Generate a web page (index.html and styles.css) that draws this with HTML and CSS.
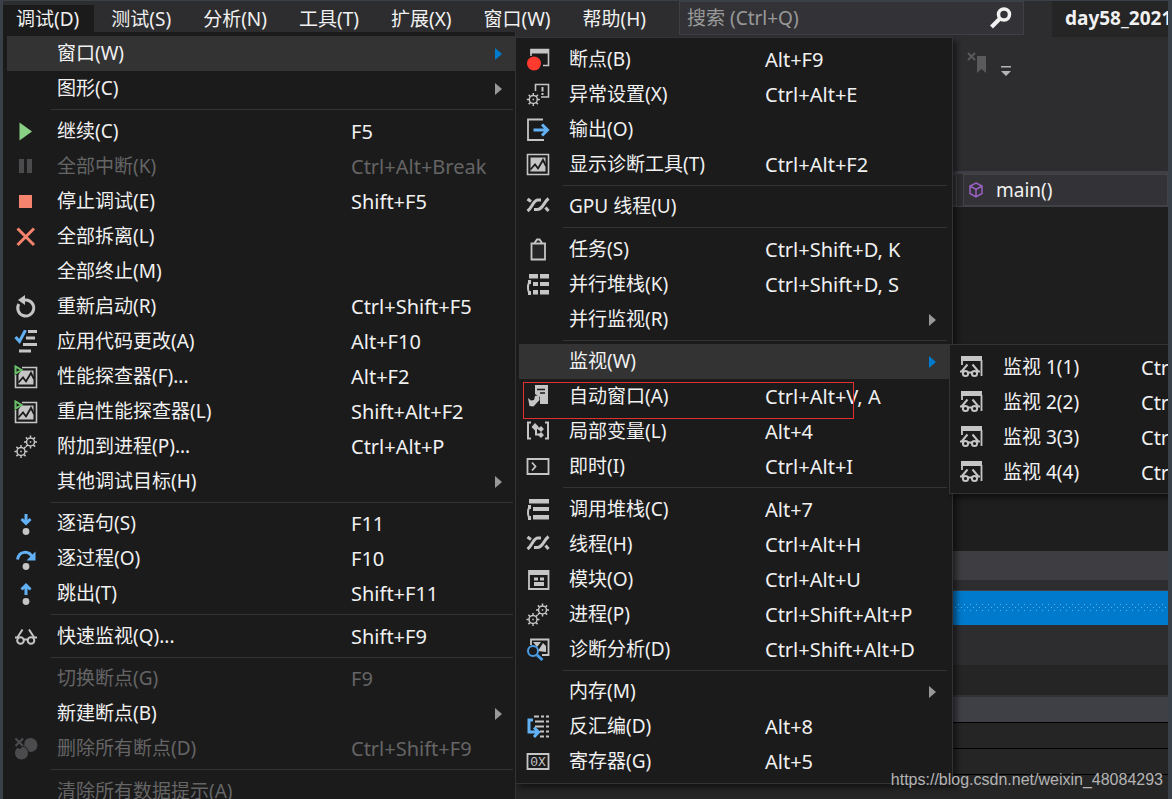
FILE: index.html
```html
<!DOCTYPE html>
<html lang="zh-CN">
<head>
<meta charset="utf-8">
<title>调试</title>
<link rel="stylesheet" href="styles.css">
</head>
<body>
<svg class="sprite" aria-hidden="true">
  <defs>
    <path id="cog" fill="none" stroke="currentColor" stroke-width="1.5" d="M0-4A4 4 0 1 1 0 4A4 4 0 1 1 0-4M0-4V-6.500M0 4V6.500M-4 0H-6.500M4 0H6.500M-2.800-2.800L-4.600-4.600M2.800-2.800L4.600-4.600M-2.800 2.800L-4.600 4.600M2.800 2.800L4.600 4.600M0-.8V.8"/>
    <g id="glasses" fill="none" stroke="currentColor" stroke-width="2"><circle cx="6.500" cy="15.500" r="3.300"/><circle cx="17" cy="15.500" r="3.300"/><path d="M1 12.500H5M10 14.500h4M19 12.500h4M3 13L8.500 4.500M20.500 13L15 4.500"/></g>
    <g id="chart"><path fill="none" stroke="currentColor" stroke-width="1.600" d="M1.500 1.500H22.500V21.500H1.500z"/><path fill="currentColor" d="M4.500 4.500H19.500V18.500H4.500z"/><path fill="none" stroke="#1b1b1c" stroke-width="1.800" d="M4.500 16.500L9 11.500l3 4L17 7l3 6"/></g>
    <g id="phone"><path fill="none" stroke="currentColor" stroke-width="2" d="M5 8.500C1 9 1 20 5 21"/><path fill="currentColor" d="M2 7h3v4H2zM2 18h3v4H2z"/></g>
  </defs>
  <symbol id="play" viewBox="0 0 24 24"><path fill="#89d185" d="M5.500 2.500V20.500L18 11.500z"/></symbol>
  <symbol id="pause" viewBox="0 0 24 24"><path fill="#4b4b4d" d="M5 4h5v14H5zM13 4h5v14h-5z"/></symbol>
  <symbol id="stop" viewBox="0 0 24 24"><path fill="#f6836d" d="M5 5h13v13H5z"/></symbol>
  <symbol id="detach" viewBox="0 0 24 24"><path stroke="#f6836d" stroke-width="3" d="M3.500 3.500L20 20M20 3.500L3.500 20"/></symbol>
  <symbol id="restart" viewBox="0 0 24 24"><path fill="none" stroke="currentColor" stroke-width="3" d="M4.800 9A8 8 0 1 0 12 5H8"/><path fill="currentColor" d="M4 5L11 0V10z"/></symbol>
  <symbol id="apply" viewBox="0 0 24 24"><path fill="none" stroke="#63b1f5" stroke-width="3" d="M1.500 7L5.500 11.500L11.500 0"/><path fill="currentColor" d="M14 0h9v3h-9zM12 6.500h9v3h-9zM9 13h14v3H9zM5 19.500h12v3H5z"/></symbol>
  <symbol id="profile" viewBox="0 0 24 24"><use href="#chart" y="1"/><path fill="#1b1b1c" d="M0 0H8V5L4 10H0z"/><path fill="none" stroke="#6cc26a" stroke-width="2" d="M1.500 1.500V8.500L7.500 5z"/></symbol>
  <symbol id="gears" viewBox="0 0 24 24"><use href="#cog" x="16.500" y="7"/><use href="#cog" x="7" y="16.500"/></symbol>
  <symbol id="into" viewBox="0 0 24 24"><path fill="none" stroke="#63b1f5" stroke-width="3" d="M12 2V12M7.500 7L12 11.500L16.500 7"/><circle cx="12" cy="19.500" r="3.400" fill="currentColor"/></symbol>
  <symbol id="over" viewBox="0 0 24 24"><path fill="none" stroke="#63b1f5" stroke-width="3" d="M3.500 12.500C5 3.500 15 3 19 11"/><path fill="#63b1f5" d="M21.500 4.500V13.500H12.500z"/><circle cx="12" cy="19.500" r="3.400" fill="currentColor"/></symbol>
  <symbol id="out" viewBox="0 0 24 24"><path fill="none" stroke="#63b1f5" stroke-width="3" d="M12 13V3M7.500 7.500L12 3L16.500 7.500"/><circle cx="12" cy="19.500" r="3.400" fill="currentColor"/></symbol>
  <symbol id="quick" viewBox="0 0 24 24"><use href="#glasses"/></symbol>
  <symbol id="clear" viewBox="0 0 24 24"><g fill="#4b4b4d"><circle cx="16.500" cy="8" r="7"/><circle cx="7.500" cy="16" r="7" stroke="#1b1b1c"/></g><path fill="#1b1b1c" d="M0 0H10.500V8L6 12L0 9z"/><path stroke="#4b4b4d" stroke-width="2.200" d="M1.500 1.500L9 9M9 1.500L1.500 9"/></symbol>
  <symbol id="breakwin" viewBox="0 0 24 24"><path fill="none" stroke="currentColor" stroke-width="1.600" d="M5 8V1.500H22.500V17.500H17"/><path fill="currentColor" d="M4.500 1H23V5.500H4.500z"/><circle cx="8" cy="15.500" r="7" fill="#ff3b30"/></symbol>
  <symbol id="exception" viewBox="0 0 24 24"><path fill="none" stroke="currentColor" stroke-width="1.600" d="M9.500 8V1.500H22.500V14H15"/><path stroke="currentColor" stroke-width="2" d="M16.500 4V8.500M16.500 10v2"/><use href="#cog" x="7.300" y="16.500"/></symbol>
  <symbol id="output" viewBox="0 0 24 24"><path fill="none" stroke="currentColor" stroke-width="1.800" d="M17 1.500H2V22H18"/><path fill="none" stroke="#63b1f5" stroke-width="3" d="M7.500 12H21M16 6.500L21.500 12L16 17.500"/></symbol>
  <symbol id="diag" viewBox="0 0 24 24"><use href="#chart"/></symbol>
  <symbol id="threads" viewBox="0 0 24 24"><path fill="none" stroke="currentColor" stroke-width="3" d="M1.500 4L5 6.500M1.500 16C7 12 7 5 12 5h3M8 14.500h3C17 14.500 17 8 22.500 3.500M19.500 12.500L22.500 16"/></symbol>
  <symbol id="task" viewBox="0 0 24 24"><path fill="#252527" stroke="currentColor" stroke-width="1.800" d="M5.500 5.500H19V21.500H5.500z"/><path fill="none" stroke="currentColor" stroke-width="2" d="M8.500 5L11 1.500h2.500L16 5"/></symbol>
  <symbol id="pstack" viewBox="0 0 24 24"><path fill="currentColor" d="M3 1h9v4.500H3zM14 1h9v4.500h-9zM7 9h5v4H7zM14 9h9v4h-9zM7 17h5v4.500H7zM14 17h9v4.500h-9z"/><use href="#phone"/></symbol>
  <symbol id="autos" viewBox="0 0 24 24"><path fill="currentColor" d="M9 0H22V19H14V12L9 9z"/><path stroke="#1b1b1c" stroke-width="1.500" d="M11 4.500h8M14 8h5"/><path fill="currentColor" d="M2 13L5 15.500L8 15L9 11L13 10L13.500 15L7.500 21.500L3.500 21z"/></symbol>
  <symbol id="locals" viewBox="0 0 24 24"><path fill="none" stroke="currentColor" stroke-width="2" d="M5 2.500H2V18.500H5M19 2.500H22V18.500H19M8 6.500L15 9.500M10 8V14.500H15"/><path fill="currentColor" d="M9 3L12.500 6.500L9 10.500L5.500 7zM15 6L18 9L15 12L12 9zM15 12L18 15L15 18L12 15z"/></symbol>
  <symbol id="immediate" viewBox="0 0 24 24"><path fill="none" stroke="currentColor" stroke-width="1.800" d="M1.500 4H22.500V19H1.500zM6 7.500L9.500 11.500L6 15.500"/></symbol>
  <symbol id="stack" viewBox="0 0 24 24"><path fill="currentColor" d="M3 1h20v4.500H3zM7 9h16v4H7zM7 17h16v4.500H7z"/><use href="#phone"/></symbol>
  <symbol id="modules" viewBox="0 0 24 24"><path fill="none" stroke="currentColor" stroke-width="1.800" d="M3 3H22.500V21H3z"/><path fill="currentColor" d="M3 2h20v5H3zM8 9.500h4v3H8zM14 9.500h4v3h-4zM8 14h10v4H8z"/></symbol>
  <symbol id="analysis" viewBox="0 0 24 24"><path fill="none" stroke="currentColor" stroke-width="1.800" d="M5 7V1.500H22.500V17H16"/><path fill="currentColor" d="M7 4h8l-4 5zM12 13l5-8 3 3v6z"/><circle cx="7" cy="13" r="5" fill="#1b1b1c" stroke="#4a9fe8" stroke-width="2"/><path stroke="#4a9fe8" stroke-width="3" d="M11 17L16.500 22"/></symbol>
  <symbol id="disasm" viewBox="0 0 24 24"><path fill="none" stroke="currentColor" stroke-width="1.800" d="M8 1.500H13M15 1.500h3M20 1.500h3M9 6.500h9M20 6.500h3M9 11.500h9M20 11.500h3M14 16.500h4M20 16.500h3M14 21.500h4M20 21.500h3"/><path fill="none" stroke="#63b1f5" stroke-width="3" d="M7 5H3V17H12M8 12.500L12.500 17L8 22"/></symbol>
  <symbol id="watch" viewBox="0 0 24 24"><path fill="none" stroke="currentColor" stroke-width="1.800" d="M2 9V2M21.500 4V20"/><path fill="currentColor" d="M1 0h21v5H1z"/><g fill="none" stroke="currentColor" stroke-width="2"><circle cx="5.500" cy="17.500" r="2.600"/><circle cx="14.500" cy="17.500" r="2.600"/><path d="M0 15.500H4M8 16.500h4M16 15.500h4M2 15L7.500 8.500M18 15L12.500 8.500"/></g></symbol>
  <symbol id="arrow" viewBox="0 0 8 12"><path fill="currentColor" d="M0 0V12L7 6z"/></symbol>
</svg>

<div class="app">
  <header class="top">
    <nav class="menubar" aria-label="主菜单">
      <button class="tab open">调试(D)</button>
      <button class="tab">测试(S)</button>
      <button class="tab">分析(N)</button>
      <button class="tab">工具(T)</button>
      <button class="tab">扩展(X)</button>
      <button class="tab">窗口(W)</button>
      <button class="tab">帮助(H)</button>
    </nav>
    <div class="search">
      <input type="text" placeholder="搜索 (Ctrl+Q)" aria-label="搜索">
      <svg class="lens" viewBox="0 0 24 24"><circle cx="15" cy="8.500" r="5.500" fill="none" stroke="#f1f1f1" stroke-width="3.500"/><path stroke="#f1f1f1" stroke-width="4" d="M11 12.500L2.500 21"/></svg>
    </div>
    <div class="solution">day58_2021</div>
  </header>
  <div class="toolbar">
    <svg class="bookmark" viewBox="0 0 50 26"><path fill="#5a5a5c" d="M10 4H19V21L14.500 17L10 21z"/><path stroke="#5a5a5c" stroke-width="2" d="M1 1L8 8M8 1L1 8"/><path fill="#b5b5b5" d="M34 14H44V15.500H34zM34 19H44L39 24z"/></svg>
  </div>
  <div class="navbar">
    <div class="scope"></div>
    <button class="member">
      <svg class="cube" viewBox="0 0 16 16"><path fill="none" stroke="#9b5fc0" stroke-width="1.500" d="M8 1L14 4V11.500L8 15L2 11.500V4zM2 4L8 7.500L14 4M8 7.500V15"/></svg>
      <span>main()</span>
    </button>
  </div>
  <main class="editor"></main>
  <div class="scrollbar"></div>
  <div class="gap"></div>
  <div class="tooltitle"><svg class="grip" width="100%" height="10"><defs><pattern id="dots" width="6" height="6" patternUnits="userSpaceOnUse"><path fill="#5fb0e6" d="M1 1h1v1H1zM4 4h1v1H4z"/></pattern></defs><rect width="100%" height="10" fill="url(#dots)"/></svg></div>
  <div class="tooltools"></div>
  <div class="toolbody"></div>
  <div class="columns"></div>
  <div class="line"></div>
  <div class="line"></div>
  <div class="line rest"></div>

  <ul class="menu debug">
    <li><button class="row hot"><i></i><span>窗口(W)</span><kbd></kbd><svg class="arrow"><use href="#arrow"/></svg></button></li>
    <li><button class="row"><i></i><span>图形(C)</span><kbd></kbd><svg class="arrow"><use href="#arrow"/></svg></button></li>
    <li class="sep"></li>
    <li><button class="row"><svg class="icon"><use href="#play"/></svg><span>继续(C)</span><kbd>F5</kbd></button></li>
    <li><button class="row" disabled><svg class="icon"><use href="#pause"/></svg><span>全部中断(K)</span><kbd>Ctrl+Alt+Break</kbd></button></li>
    <li><button class="row"><svg class="icon"><use href="#stop"/></svg><span>停止调试(E)</span><kbd>Shift+F5</kbd></button></li>
    <li><button class="row"><svg class="icon"><use href="#detach"/></svg><span>全部拆离(L)</span></button></li>
    <li><button class="row"><i></i><span>全部终止(M)</span></button></li>
    <li><button class="row"><svg class="icon"><use href="#restart"/></svg><span>重新启动(R)</span><kbd>Ctrl+Shift+F5</kbd></button></li>
    <li><button class="row"><svg class="icon"><use href="#apply"/></svg><span>应用代码更改(A)</span><kbd>Alt+F10</kbd></button></li>
    <li><button class="row"><svg class="icon"><use href="#profile"/></svg><span>性能探查器(F)...</span><kbd>Alt+F2</kbd></button></li>
    <li><button class="row"><svg class="icon"><use href="#profile"/></svg><span>重启性能探查器(L)</span><kbd>Shift+Alt+F2</kbd></button></li>
    <li><button class="row"><svg class="icon"><use href="#gears"/></svg><span>附加到进程(P)...</span><kbd>Ctrl+Alt+P</kbd></button></li>
    <li><button class="row"><i></i><span>其他调试目标(H)</span><kbd></kbd><svg class="arrow"><use href="#arrow"/></svg></button></li>
    <li class="sep tight"></li>
    <li><button class="row"><svg class="icon"><use href="#into"/></svg><span>逐语句(S)</span><kbd>F11</kbd></button></li>
    <li><button class="row"><svg class="icon"><use href="#over"/></svg><span>逐过程(O)</span><kbd>F10</kbd></button></li>
    <li><button class="row"><svg class="icon"><use href="#out"/></svg><span>跳出(T)</span><kbd>Shift+F11</kbd></button></li>
    <li class="sep"></li>
    <li><button class="row"><svg class="icon"><use href="#quick"/></svg><span>快速监视(Q)...</span><kbd>Shift+F9</kbd></button></li>
    <li class="sep tight"></li>
    <li><button class="row" disabled><i></i><span>切换断点(G)</span><kbd>F9</kbd></button></li>
    <li><button class="row"><i></i><span>新建断点(B)</span><kbd></kbd><svg class="arrow"><use href="#arrow"/></svg></button></li>
    <li><button class="row" disabled><svg class="icon"><use href="#clear"/></svg><span>删除所有断点(D)</span><kbd>Ctrl+Shift+F9</kbd></button></li>
    <li class="sep"></li>
    <li><button class="row" disabled><i></i><span>清除所有数据提示(A)</span></button></li>
  </ul>

  <ul class="menu windows">
    <li><button class="row"><svg class="icon"><use href="#breakwin"/></svg><span>断点(B)</span><kbd>Alt+F9</kbd></button></li>
    <li><button class="row"><svg class="icon"><use href="#exception"/></svg><span>异常设置(X)</span><kbd>Ctrl+Alt+E</kbd></button></li>
    <li><button class="row"><svg class="icon"><use href="#output"/></svg><span>输出(O)</span></button></li>
    <li><button class="row"><svg class="icon"><use href="#diag"/></svg><span>显示诊断工具(T)</span><kbd>Ctrl+Alt+F2</kbd></button></li>
    <li class="sep tight"></li>
    <li><button class="row"><svg class="icon"><use href="#threads"/></svg><span>GPU 线程(U)</span></button></li>
    <li class="sep"></li>
    <li><button class="row"><svg class="icon"><use href="#task"/></svg><span>任务(S)</span><kbd>Ctrl+Shift+D, K</kbd></button></li>
    <li><button class="row"><svg class="icon"><use href="#pstack"/></svg><span>并行堆栈(K)</span><kbd>Ctrl+Shift+D, S</kbd></button></li>
    <li><button class="row"><i></i><span>并行监视(R)</span><kbd></kbd><svg class="arrow"><use href="#arrow"/></svg></button></li>
    <li class="sep tight"></li>
    <li><button class="row hot"><i></i><span>监视(W)</span><kbd></kbd><svg class="arrow"><use href="#arrow"/></svg></button></li>
    <li class="marked"><button class="row"><svg class="icon"><use href="#autos"/></svg><span>自动窗口(A)</span><kbd>Ctrl+Alt+V, A</kbd></button></li>
    <li><button class="row"><svg class="icon"><use href="#locals"/></svg><span>局部变量(L)</span><kbd>Alt+4</kbd></button></li>
    <li><button class="row"><svg class="icon"><use href="#immediate"/></svg><span>即时(I)</span><kbd>Ctrl+Alt+I</kbd></button></li>
    <li class="sep"></li>
    <li><button class="row"><svg class="icon"><use href="#stack"/></svg><span>调用堆栈(C)</span><kbd>Alt+7</kbd></button></li>
    <li><button class="row"><svg class="icon"><use href="#threads"/></svg><span>线程(H)</span><kbd>Ctrl+Alt+H</kbd></button></li>
    <li><button class="row"><svg class="icon"><use href="#modules"/></svg><span>模块(O)</span><kbd>Ctrl+Alt+U</kbd></button></li>
    <li><button class="row"><svg class="icon"><use href="#gears"/></svg><span>进程(P)</span><kbd>Ctrl+Shift+Alt+P</kbd></button></li>
    <li><button class="row"><svg class="icon"><use href="#analysis"/></svg><span>诊断分析(D)</span><kbd>Ctrl+Shift+Alt+D</kbd></button></li>
    <li class="sep tight"></li>
    <li><button class="row"><i></i><span>内存(M)</span><kbd></kbd><svg class="arrow"><use href="#arrow"/></svg></button></li>
    <li><button class="row"><svg class="icon"><use href="#disasm"/></svg><span>反汇编(D)</span><kbd>Alt+8</kbd></button></li>
    <li><button class="row"><svg class="icon" viewBox="0 0 24 24"><path fill="none" stroke="currentColor" stroke-width="1.800" d="M1.500 4H22.500V19H1.500z"/><text class="reg" x="12" y="16" text-anchor="middle" fill="currentColor">0X</text></svg><span>寄存器(G)</span><kbd>Alt+5</kbd></button></li>
  </ul>

  <ul class="menu watches">
    <li><button class="row"><svg class="icon"><use href="#watch"/></svg><span>监视 1(1)</span><kbd>Ctr</kbd></button></li>
    <li><button class="row"><svg class="icon"><use href="#watch"/></svg><span>监视 2(2)</span><kbd>Ctr</kbd></button></li>
    <li><button class="row"><svg class="icon"><use href="#watch"/></svg><span>监视 3(3)</span><kbd>Ctr</kbd></button></li>
    <li><button class="row"><svg class="icon"><use href="#watch"/></svg><span>监视 4(4)</span><kbd>Ctr</kbd></button></li>
  </ul>
</div>
<div class="credit">https://blog.csdn.net/weixin_48084293</div>
</body>
</html>
```
FILE: styles.css
```css
* { box-sizing: border-box; }

body {
  margin: 0;
  height: 100vh;
  overflow: hidden;
  position: relative;
  padding: 1px 4px 0 3px;
  background: #3a4047;
  color: #f1f1f1;
  font: 19px/35px "Noto Sans", "Noto Sans CJK SC", sans-serif;
}

button, input { font: inherit; color: inherit; border: 0; margin: 0; padding: 0; background: none; }
ul { list-style: none; margin: 0; padding: 0; }
.sprite { position: absolute; width: 0; height: 0; }
.reg { font: 13px "Liberation Mono", monospace; }

.app {
  position: relative;
  height: 100%;
  overflow: hidden;
  display: flex;
  flex-direction: column;
  background: #2d2d30;
}
.app > * { flex: none; }

/* menu bar */
.top { display: flex; height: 36px; }
.menubar { display: flex; gap: 2px; width: 676px; padding-top: 4px; }
.tab { padding: 0 15px; line-height: 27px; height: 28px; white-space: nowrap; }
.tab.open { background: #1b1b1c; padding: 0 15px 0 13px; }
.search {
  display: flex;
  align-items: center;
  width: 345px;
  height: 34px;
  padding: 0 10px 0 7px;
  background: #333337;
  border: 1px solid #3f3f46;
}
.search input { flex: 1; min-width: 0; }
.search input::placeholder { color: #999; opacity: 1; }
.lens { width: 24px; height: 24px; }
.solution {
  flex: 1;
  min-width: 0;
  margin-left: 28px;
  padding-left: 13px;
  overflow: hidden;
  background: #252526;
  font-weight: bold;
}

/* window content behind the menus */
.toolbar { display: flex; justify-content: flex-end; height: 134px; padding: 15px 151px 0 0; }
.bookmark { width: 50px; height: 26px; }
.navbar { display: flex; gap: 6px; height: 36px; border-top: 3px solid #3f3f46; border-bottom: 1px solid #3f3f46; }
.scope { width: 954px; background: #333337; border: 1px solid #434346; }
.member {
  flex: 1;
  display: flex;
  align-items: center;
  gap: 12px;
  padding-left: 4px;
  background: #333337;
  border: 1px solid #434346;
}
.cube { width: 16px; height: 16px; }
.editor { height: 344px; background: #1e1e1e; }
.scrollbar { height: 29px; background: #3e3e42; }
.gap { height: 11px; border-bottom: 1px solid #3f3f46; }
.tooltitle { display: flex; align-items: center; height: 34px; background: #007acc; }
.tooltools { height: 40px; }
.toolbody { height: 32px; background: #252526; border-bottom: 2px solid #333337; }
.columns { height: 25px; background: #3f3f46; }
.line { height: 26px; background: #252526; border-top: 1px solid #000; }
.app > .rest { flex: 1; }

/* popup menus */
.menu { position: absolute; background: #1b1b1c; border: 1px solid #333337; }
.debug { left: 0; top: 31px; width: 513px; padding: 4px 0 0 4px; --keys: 164px; border-width: 0 1px 0 0; }
.windows { left: 512px; top: 36px; width: 438px; padding: 4px 3px; --keys: 184px; box-shadow: 4px 4px 5px rgba(0, 0, 0, .45); }
.watches { left: 946px; top: 343px; right: 0; padding: 5px 0 3px 3px; --keys: 27px; border-right: 0; box-shadow: 4px 4px 5px rgba(0, 0, 0, .45); }

.row {
  position: relative;
  display: grid;
  grid-template-columns: 24px 1fr var(--keys);
  align-items: center;
  width: 100%;
  height: 35px;
  padding-left: 7px;
  text-align: left;
  white-space: nowrap;
}
.row span { padding-left: 19px; }
.row kbd { font: 20px/35px "Noto Sans", sans-serif; }
.row:disabled { color: #656565; }
.hot { background: #333334; }
.icon { width: 24px; height: 24px; color: #c5c5c5; }
.arrow { position: absolute; right: 12px; top: 12px; width: 8px; height: 12px; color: #999; }
.hot .arrow { color: #007acc; }
.sep { height: 8px; margin: 0 2px 0 44px; padding-top: 3px; }
.sep::before { content: ""; display: block; height: 1px; background: #333337; }
.sep.tight { height: 7px; }

.marked { position: relative; z-index: 1; }
.marked::after {
  content: "";
  position: absolute;
  left: 4px;
  top: 3px;
  width: 329px;
  height: 35px;
  border: 1px solid #e03030;
  pointer-events: none;
}

.credit {
  position: absolute;
  right: 9px;
  bottom: 8px;
  font: 16px/22px "Liberation Sans", sans-serif;
  color: #b4b4b4;
}
```
